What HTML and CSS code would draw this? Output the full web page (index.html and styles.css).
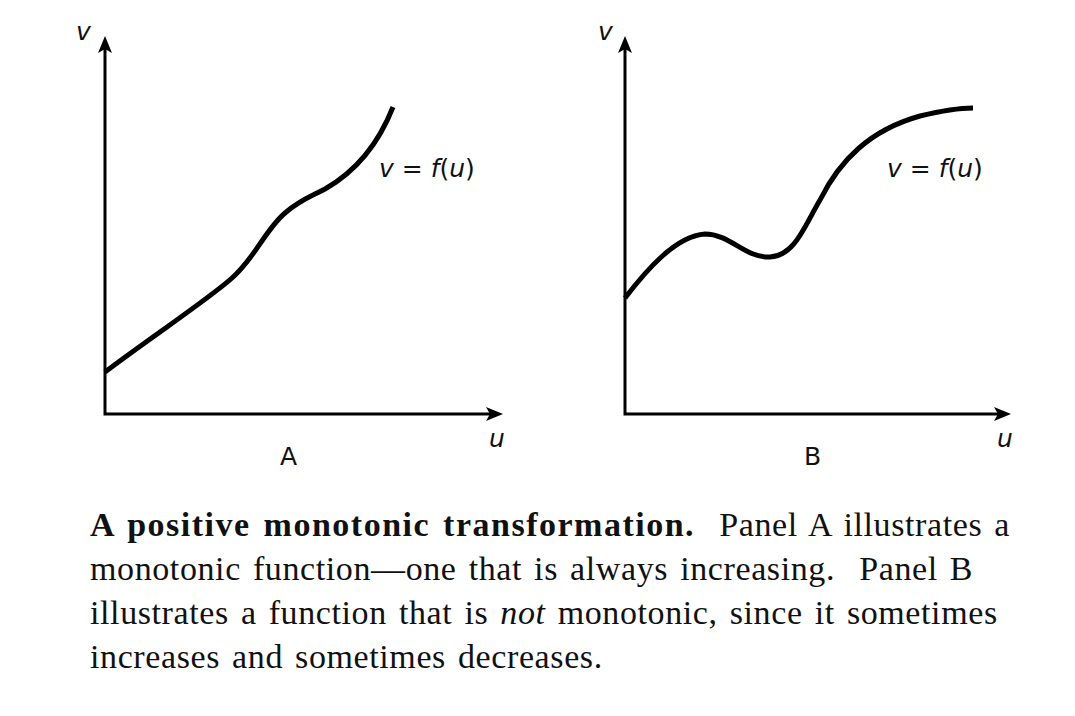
FILE: index.html
```html
<!DOCTYPE html>
<html lang="en">
<head>
<meta charset="utf-8">
<title>Monotonic transformation</title>
<link rel="stylesheet" href="styles.css">
</head>
<body>
<figure class="figure">
  <div class="panels">
    <svg class="panel" viewBox="0 0 520 480" width="520" height="480">
      <path class="axis" d="M45 44 V414 H435"/>
      <path class="arrow" d="M45 36 L52 53 L45 49 L38 53 Z"/>
      <path class="arrow" d="M443 414 L426 407 L430 414 L426 421 Z"/>
      <path class="curve" d="M45 372 C 90 338, 150 298, 172 278 C 195 258, 205 230, 225 213 C 240 200, 250 197, 265 189 C 295 172, 318 145, 333 107"/>
      <text class="lbl" x="16" y="40"><tspan class="it">v</tspan></text>
      <text class="lbl" x="429" y="447"><tspan class="it">u</tspan></text>
      <text class="lbl" x="220" y="465">A</text>
      <text class="lbl" x="319" y="177"><tspan class="it">v</tspan> = <tspan class="it">f</tspan>(<tspan class="it">u</tspan>)</text>
    </svg>
    <svg class="panel" viewBox="0 0 520 480" width="520" height="480">
      <path class="axis" d="M45 44 V414 H423"/>
      <path class="arrow" d="M45 36 L52 53 L45 49 L38 53 Z"/>
      <path class="arrow" d="M431 414 L414 407 L418 414 L414 421 Z"/>
      <path class="curve" d="M45 298 C 65 272, 95 236, 125 234 C 150 234, 165 258, 190 257 C 215 256, 225 225, 240 200 C 260 160, 290 130, 340 116 C 365 110, 380 108, 393 108"/>
      <text class="lbl" x="18" y="40"><tspan class="it">v</tspan></text>
      <text class="lbl" x="417" y="447"><tspan class="it">u</tspan></text>
      <text class="lbl" x="224" y="465">B</text>
      <text class="lbl" x="307" y="177"><tspan class="it">v</tspan> = <tspan class="it">f</tspan>(<tspan class="it">u</tspan>)</text>
    </svg>
  </div>
  <figcaption class="caption"><b class="lead">A positive monotonic transformation.</b>&nbsp; Panel A illustrates a monotonic function—one that is always increasing.&nbsp; Panel B illustrates a function that is <i>not</i> monotonic, since it sometimes increases and sometimes decreases.</figcaption>
</figure>
</body>
</html>
```

FILE: styles.css
```css
html, body {
  margin: 0;
  padding: 0;
  background: #ffffff;
}

.figure {
  margin: 0;
  width: 1075px;
  height: 716px;
  overflow: hidden;
}

.panels {
  display: flex;
  padding-left: 60px;
}

.panel {
  display: block;
  flex: 0 0 520px;
}

.axis {
  fill: none;
  stroke: #000;
  stroke-width: 3;
}

.arrow {
  fill: #000;
}

.curve {
  fill: none;
  stroke: #000;
  stroke-width: 5;
  stroke-linecap: butt;
}

.lbl {
  font-family: "DejaVu Sans", sans-serif;
  font-size: 25px;
  fill: #111;
}

.it {
  font-style: italic;
}

.caption {
  margin: 23px 0 0 90px;
  width: 940px;
  font-family: "Liberation Serif", serif;
  font-size: 34px;
  line-height: 44px;
  letter-spacing: 0.6px;
  word-spacing: 3px;
  color: #111;
}

.lead {
  letter-spacing: 1.5px;
}
```
